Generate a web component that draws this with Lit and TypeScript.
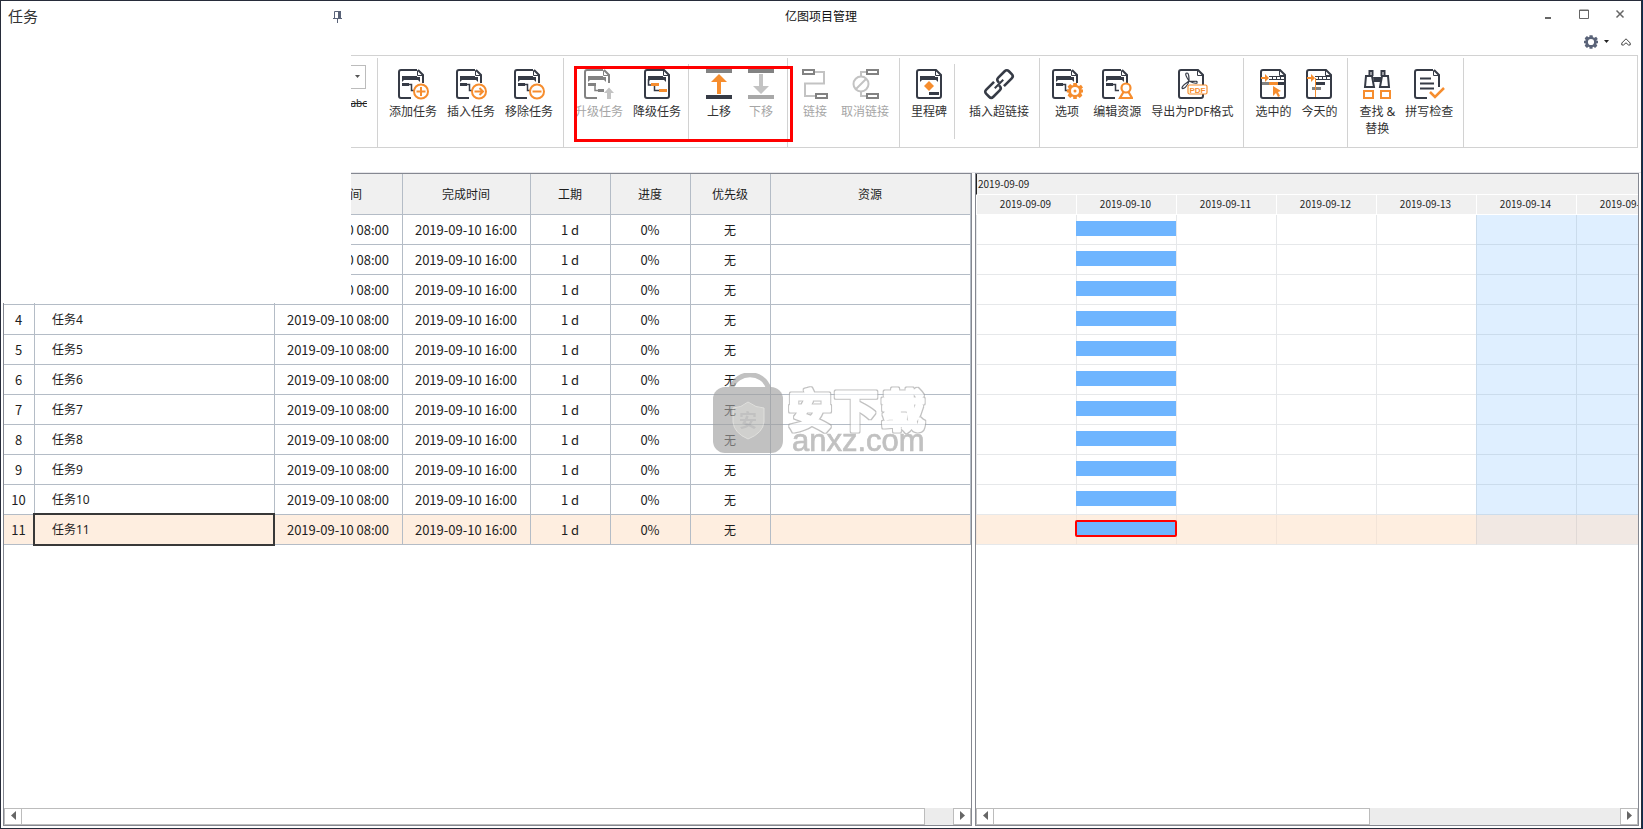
import { LitElement, html, svg, css, nothing, TemplateResult } from "lit";
import { customElement, property, state } from "lit/decorators.js";
import { classMap } from "lit/directives/class-map.js";

const DARK = "#363b46";
const ORANGE = "#f68d2e";
const GREY = "#828282";
const PALE = "#c3c3c3";

/* A page outline; `cut` leaves the lower right corner open for a badge. */
const page = (color: string, cut: boolean) => svg`
  <path d=${cut ? "M19 1H3Q1 1 1 3V27Q1 29 3 29H13M20 1L25 6V14" : "M19 1H3Q1 1 1 3V27Q1 29 3 29H23Q25 29 25 27V6L20 1H18"}
    fill="none" stroke=${color} stroke-width="2"/>
  <path d="M19.500 1.500V6.500H25" fill="none" stroke=${color}/>`;
const band = (color: string) => svg`<path d="M4 7H19V8H22V13L20 11H6L4 13Z" fill=${color}/>`;
const steps = (color: string) => svg`
  <path d="M4 14H11V17H4Z" fill=${color}/><path d="M10 15.500H13.500V21.500H17" fill="none" stroke=${color} stroke-width="1.500"/>`;
const badge = (mark: string) => svg`
  <circle cx="23" cy="22.500" r="7" fill="#fff" stroke=${ORANGE} stroke-width="2"/>
  <path d=${mark} fill="none" stroke=${ORANGE} stroke-width="2"/>`;
const at = (x: number, body: unknown) => svg`<g transform="translate(${x} 1)">${body}</g>`;
const ruler = svg`
  <path d="M9 7.500H25M9 10.500H25M12.500 8V10M16.500 8V10M20.500 8V10" stroke=${DARK} fill="none"/>
  <path d="M1 8H5V5L9 9L5 13V10H1Z" fill=${ORANGE}/>`;
const gearPath =
  "M-1.800-8H1.800L2.300-5.700L4-4.900L6-6.200L8-3.600L6.400-2L6.600-1.500H8.200V1.500H6.600L6.200 2.400L7.400 4.400L4.800 6.900L2.900 5.600L1.800 6.100V8H-1.800V6.100L-2.900 5.600L-4.800 6.900L-7.400 4.400L-6.200 2.400L-6.600 1.500H-8.200V-1.500H-6.600L-6.200-2.400L-7.400-4.400L-4.800-6.900L-2.900-5.600L-1.800-6.100Z";

const ICONS: Record<string, unknown> = {
  add: at(1, [page(DARK, true), band(DARK), steps(DARK), badge("M18.500 22.500H27.500M23 18V27")]),
  insert: at(1, [page(DARK, true), band(DARK), steps(DARK), badge("M18.500 22.500H27M23.500 19L27 22.500L23.500 26")]),
  remove: at(1, [page(DARK, true), band(DARK), steps(DARK), badge("M18.500 22.500H27.500")]),
  upgrade: at(1, [
    page(GREY, true), band(GREY),
    svg`<path d="M4 14H12V17H4Z" fill=${GREY}/><path d="M11 16V21.500H15" fill="none" stroke=${GREY} stroke-width="1.500"/>
      <path d="M14 20H20V23H14Z" fill=${GREY}/><path d="M20 24L25 18.500L30 24H27V30H23V24Z" fill=${PALE}/>`,
  ]),
  downgrade: at(3, [
    page(DARK, false), band(DARK),
    svg`<path d="M4.500 10V16H7M10.500 17V21.500H15" fill="none" stroke=${DARK} stroke-width="1.500"/>
      <path d="M7 14H15V17H7ZM15 20H23V23H15Z" fill=${ORANGE}/>`,
  ]),
  up: svg`<path d="M3 1H29V5H3Z" fill=${GREY}/><path d="M3 27H29V31H3Z" fill=${DARK}/>
    <path d="M16 6L24 14H18V26H14V14H8Z" fill=${ORANGE}/>`,
  down: svg`<path d="M3 1H29V5H3Z" fill=${GREY}/><path d="M3 27H29V31H3Z" fill="#a8a8a8"/>
    <path d="M16 26L24 18H18V6H14V18H8Z" fill=${PALE}/>`,
  link: svg`<path d="M15 4H25V15.500H6V28H16" fill="none" stroke=${PALE} stroke-width="2"/>
    <path d="M4 2H15V6H4ZM17 26H28V30H17Z" fill="#fff" stroke=${GREY} stroke-width="2"/>`,
  unlink: svg`<path d="M18 4H12V8M18 28H12V24" fill="none" stroke=${PALE} stroke-width="2"/>
    <path d="M18 2H29V6H18ZM18 26H29V30H18Z" fill="#fff" stroke=${GREY} stroke-width="2"/>
    <circle cx="12" cy="16" r="7.500" fill="#fff" stroke=${PALE} stroke-width="2"/><path d="M7 21L17 11" stroke=${PALE} stroke-width="2"/>`,
  milestone: at(3, [
    page(DARK, false), band(DARK),
    svg`<path d="M13 12L18 17L13 22L8 17Z" fill=${ORANGE}/><path d="M13 23H23V26H13Z" fill=${DARK}/>`,
  ]),
  hyperlink: svg`<g fill="none" stroke=${DARK} stroke-width="2.600" transform="rotate(-45 16 16)">
      <path d="M14 11H3Q0 11 0 14V18Q0 21 3 21H12Q15 21 15 18V17"/>
      <path d="M18 21H29Q32 21 32 18V14Q32 11 29 11H20Q17 11 17 14V15"/><path d="M10 16H22" stroke-width="2"/></g>`,
  options: at(1, [
    page(DARK, true), band(DARK), steps(DARK),
    svg`<path transform="translate(23 22)" d=${gearPath} fill=${ORANGE}/><circle cx="23" cy="22" r="4" fill="#fff"/><circle cx="23" cy="22" r="1.500" fill=${ORANGE}/>`,
  ]),
  resource: at(1, [
    page(DARK, true), band(DARK), steps(DARK),
    svg`<circle cx="24" cy="19" r="4.500" fill="#fff" stroke=${ORANGE} stroke-width="2.200"/>
      <path d="M21.500 23L18 29H30L26.500 23" fill="none" stroke=${ORANGE} stroke-width="2.200"/>`,
  ]),
  pdf: at(2, [
    page(DARK, false),
    svg`<path d="M9 4C6 4 9 9 11 12C16 13 20 11 19 14C17 15 13 13 11 12C10 17 5 21 4 19C4 16 9 14 11 12C11 9 11 4 9 4Z" fill="none" stroke=${DARK} stroke-width="1.200"/>
      <rect x="10" y="16" width="19" height="9" rx="1.500" fill="#fff" stroke=${ORANGE} stroke-width="1.200"/>
      <text x="19.500" y="23.500" font-size="8" font-weight="700" text-anchor="middle" fill=${ORANGE} font-family="Liberation Sans">PDF</text>`,
  ]),
  selected: at(3, [
    page(DARK, false), ruler,
    svg`<path d="M2 13H10V16H2Z" fill=${GREY}/><path d="M9 13H18V16H9Z" fill=${ORANGE}/><path d="M18 13H25V16H18Z" fill=${DARK}/>
      <path d="M13 17L21 22L18 23L20 27L18 28L16 24L13 27Z" fill=${ORANGE}/>`,
  ]),
  today: at(3, [
    page(DARK, false), ruler,
    svg`<path d="M9 13H19V16H9Z" fill=${DARK}/><path d="M6 18H15V21H6Z" fill=${GREY}/><path d="M9.500 9V28" stroke=${ORANGE}/>`,
  ]),
  find: svg`<g fill="none" stroke-width="2"><path d="M5 8H11L13 19H4ZM21 8H27L28 19H19Z" stroke=${DARK}/>
      <path d="M8.500 8V3H11.500V8M20.500 8V3H23.500V8" stroke=${DARK}/><path d="M12 9H20V14H13Z" fill=${DARK} stroke="none"/>
      <path d="M3 23H12V30H3ZM20 23H29V30H20Z" stroke=${ORANGE}/></g>`,
  spell: at(1, [
    page(DARK, true),
    svg`<path d="M6 9.500H17M6 14.500H20M6 19.500H20" stroke=${DARK} stroke-width="2"/><path d="M25 6V18" stroke=${DARK} stroke-width="2"/>
      <path d="M16 23L21 28L30 19" fill="none" stroke=${ORANGE} stroke-width="2.500"/>`,
  ]),
};

interface Command { icon: string; label: string; off?: boolean }
/* Outer list: ribbon groups. Inner list: sections parted by a short rule. */
const RIBBON: Command[][][] = [
  [[{ icon: "add", label: "添加任务" }, { icon: "insert", label: "插入任务" }, { icon: "remove", label: "移除任务" }]],
  [
    [{ icon: "upgrade", label: "升级任务", off: true }, { icon: "downgrade", label: "降级任务" }],
    [{ icon: "up", label: "上移" }, { icon: "down", label: "下移", off: true }],
  ],
  [[{ icon: "link", label: "链接", off: true }, { icon: "unlink", label: "取消链接", off: true }]],
  [[{ icon: "milestone", label: "里程碑" }], [{ icon: "hyperlink", label: "插入超链接" }]],
  [[{ icon: "options", label: "选项" }, { icon: "resource", label: "编辑资源" }, { icon: "pdf", label: "导出为PDF格式" }]],
  [[{ icon: "selected", label: "选中的" }, { icon: "today", label: "今天的" }]],
  [[{ icon: "find", label: "查找 &\n替换" }, { icon: "spell", label: "拼写检查" }]],
];

const base = css`
  *, *::before, *::after { box-sizing: border-box; }
  button { margin: 0; padding: 0; border: 0; background: none; font: inherit; color: inherit; }
  svg { display: block; flex: none; }
`;

@customElement("ribbon-bar")
export class RibbonBar extends LitElement {
  static styles = [base, css`
    :host { display: flex; height: 93px; border: 1px solid #d2d2d2; font-family: "Noto Sans", "Noto Sans CJK SC", sans-serif; }
    .group { display: flex; margin-top: 2px; border-right: 1px solid #d2d2d2; position: relative; flex: none; }
    .font { width: 373px; padding: 7px 10px 0 0; flex-direction: column; align-items: flex-end; gap: 5px; }
    .picker { position: relative; width: 64px; height: 24px; margin-right: 1px; }
    .picker select { appearance: none; width: 100%; height: 100%; border: 1px solid #bcbcbc; border-radius: 0; background: #fff; }
    .picker svg { position: absolute; right: 6px; top: 10px; }
    .strike { font-size: 10px; line-height: 18px; text-decoration: line-through; }
    .section { display: flex; align-items: flex-start; padding: 10px 5px 0 6px; }
    .section + .section { padding-left: 10px; position: relative; }
    .section:has(+ .section) { padding-right: 2px; }
    .section + .section::before { content: ""; position: absolute; left: 0; top: 6px; height: 75px; width: 1px; background: #d2d2d2; }
    .command { display: flex; flex-direction: column; align-items: center; gap: 3px; min-width: 42px; padding: 0 5px; line-height: 17px; white-space: pre; text-align: center; color: #333; }
    .command:disabled { color: #a6a6a6; }
    .mark { position: absolute; left: 10px; right: -6px; top: 8px; height: 76px; border: 3px solid #f00; pointer-events: none; z-index: 2; }
  `];
  render() {
    return html`
      <div class="group font">
        <div class="picker">
          <select aria-label="字体"><option></option></select>
          <svg width="5" height="3" viewBox="0 0 5 3"><path d="M0 0H5L2.500 3Z" fill="#555"/></svg>
        </div>
        <button class="strike">abc</button>
      </div>
      ${RIBBON.map((group, i) => html`
        <div class="group">
          ${group.map((section) => html`<div class="section">
            ${section.map((c) => html`<button class="command" ?disabled=${c.off}>
              <svg width="32" height="32" viewBox="0 0 32 32">${ICONS[c.icon]}</svg><span>${c.label}</span>
            </button>`)}
          </div>`)}
          ${i === 1 ? html`<div class="mark"></div>` : nothing}
        </div>`)}
    `;
  }
}

@customElement("scroll-strip")
export class ScrollStrip extends LitElement {
  @property({ type: Number }) share = 50;
  static styles = [base, css`
    :host { display: flex; height: 17px; background: #ececec; }
    .arrow { display: grid; place-items: center; width: 18px; height: 17px; border: 1px solid #bcbcbc; background: #fff; padding-bottom: 2px; }
    .track { flex: 1; display: flex; }
    .thumb { background: #fff; border: 1px solid #bcbcbc; border-left: 0; }
  `];
  render() {
    return html`
      <button class="arrow" aria-label="向左滚动"><svg width="5" height="9" viewBox="0 0 5 9"><path d="M5 0V9L0 4.500Z" fill="#666"/></svg></button>
      <div class="track"><div class="thumb" style="width:${this.share}%"></div></div>
      <button class="arrow" aria-label="向右滚动"><svg width="5" height="9" viewBox="0 0 5 9"><path d="M0 0V9L5 4.500Z" fill="#666"/></svg></button>
    `;
  }
}

const TASKS = Array.from({ length: 11 }, (_, i) => ({
  id: i + 1, name: `任务${i + 1}`, start: "2019-09-10 08:00", end: "2019-09-10 16:00", span: "1 d", done: "0%", priority: "无",
}));
const DAYS = ["2019-09-09", "2019-09-10", "2019-09-11", "2019-09-12", "2019-09-13", "2019-09-14", "2019-09-15"];

@customElement("task-table")
export class TaskTable extends LitElement {
  @property({ type: Number }) selected = 0;
  static styles = [base, css`
    :host { display: block; }
    table { width: 100%; table-layout: fixed; border-collapse: separate; border-spacing: 0; font-size: 13px; color: #1e1e1e; }
    th, td { padding: 0 1px 0 0; border-right: 1px solid #b4bcc6; border-bottom: 1px solid #b4bcc6; text-align: center; font-weight: 400; white-space: nowrap; }
    th { height: 41px; font-size: 12px; background: #f0f0f0; padding-bottom: 2px; }
    td { height: 30px; line-height: 20px; }
    td.name { position: relative; text-align: left; padding-left: 17px; font-size: 12px; font-family: "Noto Sans", "Noto Sans CJK SC", sans-serif; }
    td.level { font-size: 12px; }
    .no { width: 31px; } .title { width: 240px; } .time { width: 128px; } .short { width: 80px; }
    .on td { background: #feeee0; }
    .on td.name::after { content: ""; position: absolute; inset: -2px -1px -2px -2px; border: 2px solid #383838; z-index: 1; }
  `];
  render() {
    return html`<table>
      <thead><tr>
        <th class="no"></th><th class="title">任务名称</th><th class="time">开始时间</th><th class="time">完成时间</th>
        <th class="short">工期</th><th class="short">进度</th><th class="short">优先级</th><th>资源</th>
      </tr></thead>
      <tbody>${TASKS.map((t) => html`<tr class=${classMap({ on: t.id === this.selected })}>
        <td>${t.id}</td><td class="name">${t.name}</td><td>${t.start}</td><td>${t.end}</td>
        <td>${t.span}</td><td>${t.done}</td><td class="level">${t.priority}</td><td></td>
      </tr>`)}</tbody>
    </table>`;
  }
}

@customElement("gantt-chart")
export class GanttChart extends LitElement {
  @property({ type: Number }) selected = 0;
  static styles = [base, css`
    :host { display: block; overflow: hidden; color: #1e1e1e; font-size: 10px; }
    .range { height: 21px; line-height: 20px; padding-left: 1px; background: #f0f0f0; border-bottom: 1px solid #fff; border-left: 1px solid #222; }
    .row { display: grid; grid-template-columns: repeat(7, 100px); }
    .head div { height: 20px; line-height: 18px; padding-right: 2px; text-align: center; background: #f0f0f0; border-left: 1px solid #fff; border-bottom: 1px solid #fff; }
    .task div { height: 30px; padding-top: 6px; border-left: 1px solid #e6e8ea; border-bottom: 1px solid #e6e8ea; }
    .task .rest { background: #dfefff; border-color: #cbdcec; }
    .on div { background: #feeee0; border-left-color: #f3e4d8; }
    .task.on .rest { background: #f1e8e3; border-left-color: #e0d9d6; border-bottom-color: #e6e8ea; }
    .bar { display: block; height: 15px; margin-left: -1px; background: #6eb5ff; position: relative; }
    .on .bar { outline: 2px solid #f00; outline-offset: -1px; border-radius: 1px; }
  `];
  render() {
    return html`
      <div class="range">${DAYS[0]}</div>
      <div class="row head">${DAYS.map((d) => html`<div>${d}</div>`)}</div>
      ${TASKS.map((t) => html`<div class="row task ${t.id === this.selected ? "on" : ""}">
        ${DAYS.map((d, i) => html`<div class=${i > 4 ? "rest" : ""}>${t.start.startsWith(d) ? html`<span class="bar"></span>` : nothing}</div>`)}
      </div>`)}
    `;
  }
}

@customElement("app-root")
export class AppRoot extends LitElement {
  @state() private selected = 11;
  static styles = [base, css`
    :host {
      display: block; height: 100vh; padding: 0 1px 1px 0;
      background: linear-gradient(90deg, #0b2c4e 0, #0a4a86 60%, #0b2c4e 97%, #d08a20 98%, #0b2c4e 100%);
      font-family: "Noto Sans CJK SC", "Noto Sans", sans-serif; font-size: 12px; color: #222;
    }
    .window { position: relative; display: flex; flex-direction: column; height: 100%; background: #fff; border: 1px solid #272c3a; overflow: hidden; }
    .caption { display: grid; grid-template-columns: 1fr auto 1fr; align-items: center; height: 29px; flex: none; }
    .caption h1 { grid-column: 2; margin: 0; font-size: 12px; font-weight: 400; color: #111; }
    .controls { display: flex; justify-content: flex-end; gap: 26px; padding-right: 16px; align-items: center; height: 26px; align-self: start; }
    .tools { display: flex; justify-content: flex-end; align-items: center; gap: 6px; height: 25px; padding: 0 10px 2px 0; flex: none; }
    .tools .fold { margin-left: 6px; }
    ribbon-bar { margin: 0 3px; flex: none; }
    .work { flex: 1; min-height: 0; display: grid; grid-template-columns: 969fr 664fr; gap: 3px; margin: 24px 0 0; padding: 0 2px 2px; border-top: 1px solid #e6e6ea; }
    .pane { display: flex; flex-direction: column; min-width: 0; border: 1px solid #858891; overflow: hidden; }
    .body { flex: 1; min-height: 0; }
    .side { position: absolute; left: 0; top: 0; width: 350px; height: 302px; background: #fff; display: flex; justify-content: space-between; align-items: flex-start; padding: 4px 9px 0 7px; z-index: 3; }
    .side h2 { margin: 0; font-size: 15px; line-height: 22px; font-weight: 400; color: #333; }
    .pin { margin-top: 6px; }
    .watermark { position: absolute; left: 712px; top: 372px; pointer-events: none; z-index: 2; }
  `];
  private watermark(): TemplateResult {
    return html`<svg class="watermark" width="216" height="84" viewBox="0 0 216 84" aria-hidden="true">
      <filter id="rim" x="-10%" y="-10%" width="120%" height="120%" color-interpolation-filters="sRGB">
        <feMorphology in="SourceAlpha" operator="dilate" radius="1" result="wide"/>
        <feFlood flood-color="#a0a0a0"/><feComposite in2="wide" operator="in" result="edge"/>
        <feMerge><feMergeNode in="edge"/><feMergeNode in="SourceGraphic"/></feMerge>
      </filter>
      <g opacity="0.65" font-family="Noto Sans CJK SC">
        <path d="M18 16C24-3 50-3 56 16" fill="none" stroke="#a0a0a0" stroke-width="5"/>
        <rect x="0" y="14" width="70" height="66" rx="12" fill="#a0a0a0"/>
        <path d="M35 29Q43 35 51 35V49Q50 60 35 66Q21 60 20 49V35Q28 35 35 29Z" fill="#b8b8b4" stroke="#d0d0cc"/>
        <text x="35" y="54" font-size="18" font-weight="700" text-anchor="middle" fill="#a0a0a0">安</text>
        <g font-size="44" font-weight="700" stroke-linejoin="round" fill="#fff" stroke="#fff" stroke-width="3" filter="url(#rim)">
          <text x="75" y="54">安</text><text x="121" y="54">下</text><text x="168" y="54">载</text>
        </g>
        <text x="79" y="78" font-size="31" font-family="Liberation Sans" fill="#a0a0a0" stroke="#a0a0a0" stroke-width="0.700">anxz.com</text>
      </g>
    </svg>`;
  }
  render() {
    return html`<div class="window">
      <header class="caption">
        <h1>亿图项目管理</h1>
        <div class="controls">
          <button aria-label="最小化"><svg width="10" height="10" viewBox="0 0 10 10"><path d="M2 9H8" stroke="#666" stroke-width="2"/></svg></button>
          <button aria-label="最大化"><svg width="10" height="10" viewBox="0 0 10 10"><path d="M.5 1H9.500V9.500H.5ZM.5 1.500H9.500" fill="none" stroke="#666"/></svg></button>
          <button aria-label="关闭"><svg width="10" height="10" viewBox="0 0 10 10"><path d="M1.500 1.500L8.500 8.500M8.500 1.500L1.500 8.500" stroke="#666" stroke-width="1.500"/></svg></button>
        </div>
      </header>
      <div class="tools">
        <button aria-label="设置"><svg width="14" height="14" viewBox="-8.200 -8.200 16.400 16.400"><path d=${gearPath} fill="#5a6378"/><circle r="3.600" fill="#fff"/></svg></button>
        <button aria-label="设置菜单"><svg width="5" height="3" viewBox="0 0 5 3"><path d="M0 0H5L2.500 3Z" fill="#222"/></svg></button>
        <button class="fold" aria-label="折叠功能区"><svg width="10" height="8" viewBox="0 0 10 8"><path d="M5 .8L9.200 5V7H7.500L5 4.800L2.500 7H.8V5Z" fill="none" stroke="#444"/></svg></button>
      </div>
      <ribbon-bar></ribbon-bar>
      <main class="work">
        <section class="pane">
          <task-table class="body" .selected=${this.selected}></task-table>
          <scroll-strip .share=${97}></scroll-strip>
        </section>
        <section class="pane">
          <gantt-chart class="body" .selected=${this.selected}></gantt-chart>
          <scroll-strip .share=${60}></scroll-strip>
        </section>
      </main>
      ${this.watermark()}
      <aside class="side">
        <h2>任务</h2>
        <button class="pin" aria-label="固定"><svg width="9" height="12" viewBox="0 0 9 12"><path d="M1.500 7V.5H7.500V7" fill="none" stroke="#5a6378"/><path d="M5 0H8V7H5Z" fill="#5a6378"/><path d="M0 7.500H9M4.500 8V12" stroke="#5a6378"/></svg></button>
      </aside>
    </div>`;
  }
}
